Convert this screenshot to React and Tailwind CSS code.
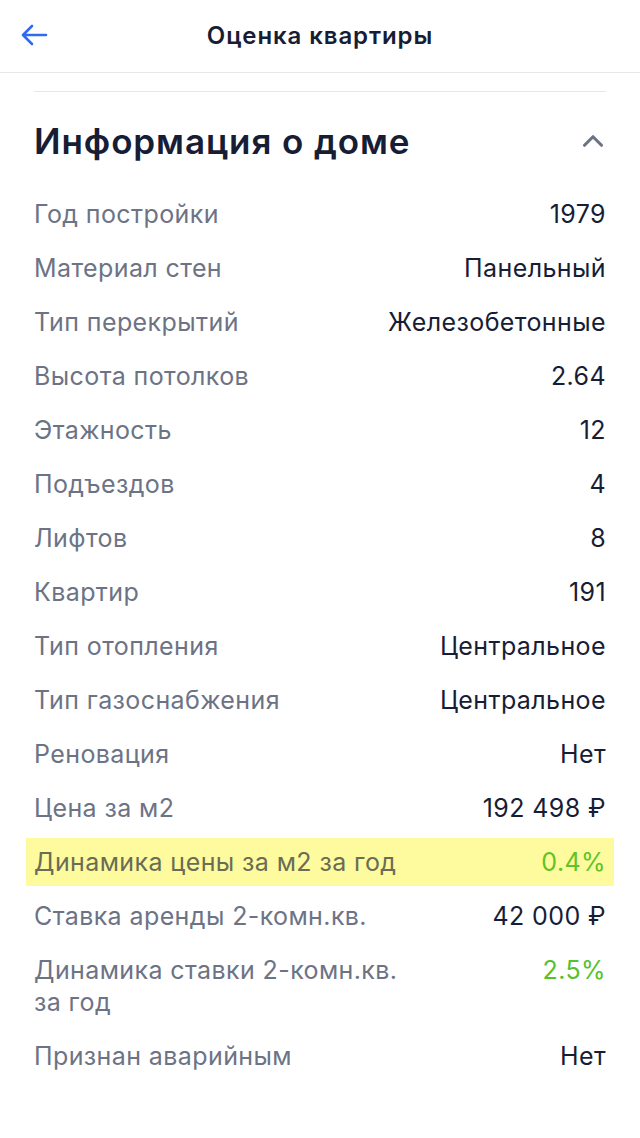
import { ChevronUp } from "lucide-react";

const rows = [
  { label: "Год постройки", value: "1979" },
  { label: "Материал стен", value: "Панельный" },
  { label: "Тип перекрытий", value: "Железобетонные" },
  { label: "Высота потолков", value: "2.64" },
  { label: "Этажность", value: "12" },
  { label: "Подъездов", value: "4" },
  { label: "Лифтов", value: "8" },
  { label: "Квартир", value: "191" },
  { label: "Тип отопления", value: "Центральное" },
  { label: "Тип газоснабжения", value: "Центральное" },
  { label: "Реновация", value: "Нет" },
  { label: "Цена за м2", value: "192 498 ₽" },
  { label: "Динамика цены за м2 за год", value: "0.4%", green: true, marked: true },
  { label: "Ставка аренды 2-комн.кв.", value: "42 000 ₽" },
  { label: "Динамика ставки 2-комн.кв. за год", value: "2.5%", green: true },
  { label: "Признан аварийным", value: "Нет" },
];

function BackArrow() {
  return (
    <svg width="30" height="24" viewBox="0 0 30 24" fill="none">
      <path
        d="M27 12H4M13 3L4 12l9 9"
        stroke="#2f6bf2"
        strokeWidth="2.6"
        strokeLinecap="round"
        strokeLinejoin="round"
      />
    </svg>
  );
}

export default function App() {
  return (
    <div className="min-h-screen bg-white font-['Inter',sans-serif] text-[#171d35]">
      {/* Top bar */}
      <header className="relative flex h-[73px] items-center justify-center border-b border-[#e6e7ea]">
        <button className="absolute left-[19px] top-[23px]">
          <BackArrow />
        </button>
        <h1 className="text-[24px] font-semibold tracking-[0.9px]">Оценка квартиры</h1>
      </header>

      <main className="px-[34px]">
        <div className="mt-[18px] border-t border-[#e6e7ea]" />

        {/* Section header */}
        <div className="mt-[27px] flex items-center justify-between">
          <h2 className="text-[35px] leading-[44px] font-semibold tracking-[0.9px]">Информация о доме</h2>
          <ChevronUp className="mr-[-4px] h-[34px] w-[34px] text-[#6d7384]" strokeWidth={2.2} />
        </div>

        {/* Parameters */}
        <div className="mt-[29px] flex flex-col gap-[10px] pb-10">
          {rows.map((row) => (
            <div
              key={row.label}
              className={`-mx-2 flex items-start justify-between gap-6 px-2 text-[25px] leading-[32px] tracking-[0.4px] ${
                row.marked ? "-my-[2px] bg-[#fdfb9e] py-[8px]" : "py-[6px]"
              }`}
            >
              <span
                className={`max-w-[380px] ${row.marked ? "text-[#6a6c55]" : "text-[#6c7385]"}`}
              >
                {row.label}
              </span>
              <span
                className={`whitespace-nowrap text-right ${
                  row.green ? (row.marked ? "text-[#5fc32a]" : "text-[#56c22b]") : "text-[#171d35]"
                }`}
              >
                {row.value}
              </span>
            </div>
          ))}
        </div>
      </main>
    </div>
  );
}
